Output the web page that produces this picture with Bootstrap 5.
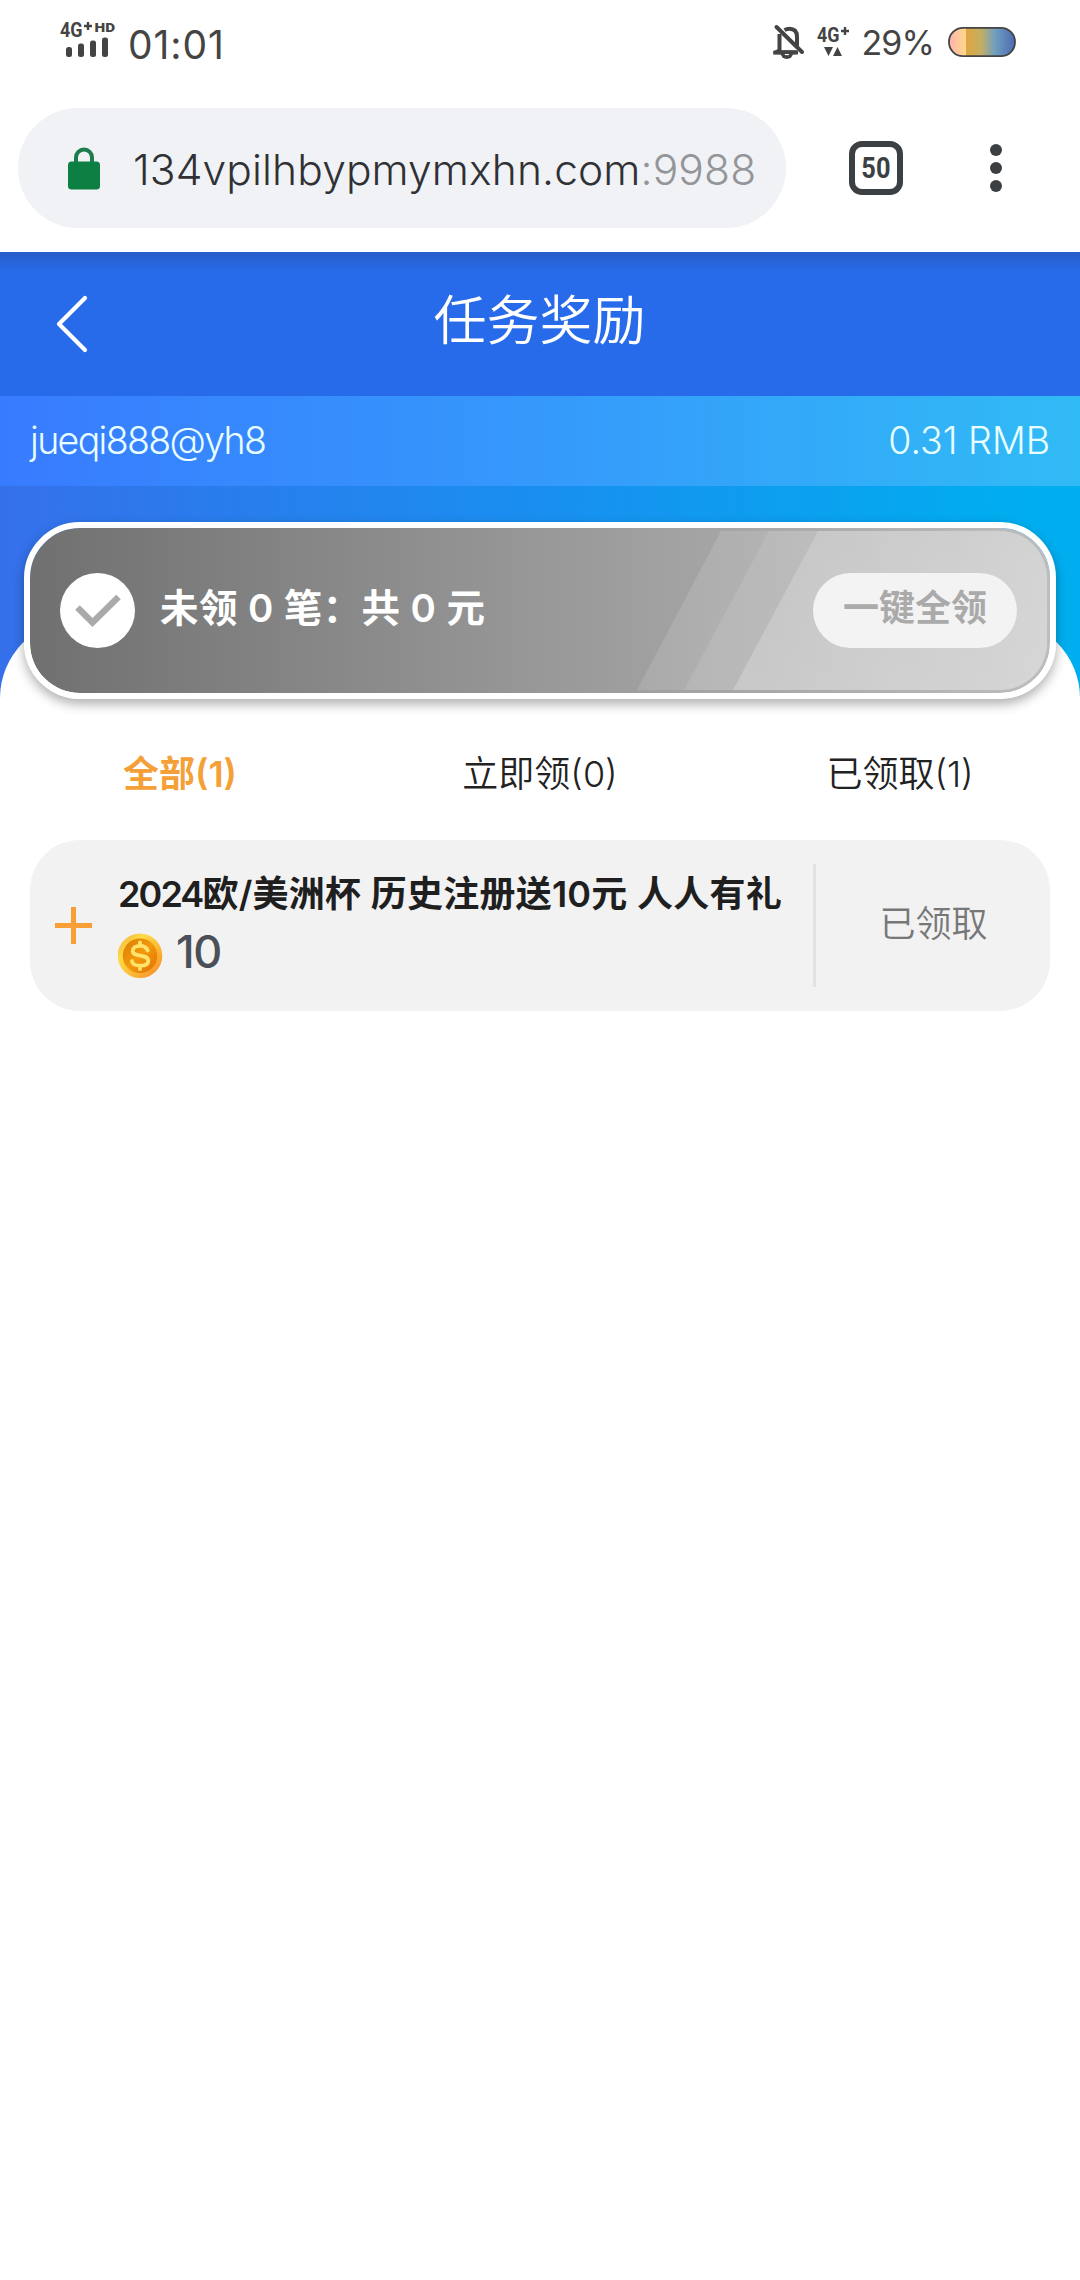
<!DOCTYPE html>
<html lang="zh-CN">
<head>
<meta charset="utf-8">
<meta name="viewport" content="width=device-width, initial-scale=1">
<title>任务奖励</title>
<link href="https://cdn.jsdelivr.net/npm/bootstrap@5.3.0/dist/css/bootstrap.min.css" rel="stylesheet">
<style>
body{background:#fff;font-family:Inter,"Noto Sans CJK SC",sans-serif;font-weight:300;line-height:1;color:#222;overflow-x:hidden}
body *{white-space:nowrap}
svg{display:block;flex:none}
.statusbar{height:108px;padding:0 63px 0 58px;color:#444}
.icons-l{margin-top:19px}
.clock{font-size:39px;font-weight:400;margin:25px 0 0 11px;letter-spacing:.9px}
.percent{width:74px;font-size:34px;font-weight:400;margin:26px 13px 0 10px;letter-spacing:-.9px;text-align:right}
.browserbar{height:144px;padding-left:18px}
.omnibox{width:768px;height:120px;border-radius:60px;background:#f0f2f5;padding-left:50px}
.url{font-size:42.5px;margin-left:33px;padding-top:5px;color:#303134;letter-spacing:.12px}
.url .port{color:#939598}
.tools{height:120px}
.tabcount{width:54px;height:54px;border:6px solid #3c4043;border-radius:13px;margin-left:63px;font:700 29.5px Roboto,sans-serif;color:#3c4043}
.tabcount span{transform:scaleX(.86)}
.kebab{gap:6px;margin-left:87px}
.kebab i{width:12px;height:12px;border-radius:50%;background:#3c4043}
.titlebar{height:144px;background:linear-gradient(#285cc9 0,#286bea 20px);color:#fff}
.titlebar .back{width:120px;padding-left:54px}
.titlebar h1{font-size:53px;font-weight:350;margin:0;padding:0 1px 4px 0}
.titlebar .spacer{width:120px}
.account{height:90px;padding:0 30px;background:linear-gradient(90deg,#387bff,#3599fb 50%,#31bbf6);color:#e9ffff;font-size:37.5px}
.account .user{letter-spacing:-1.65px}
.backdrop{height:212px;background:linear-gradient(90deg,#3570ea,#198ff0 50%,#00aeef 95%)}
.sheet{margin-top:-78px;border-radius:78px 78px 0 0;background:#fff;padding-top:1px}
.claim{position:relative;margin:-99px 24px 0;height:177px;border:6px solid #fff;border-radius:56px;background:linear-gradient(90deg,#707070,#989898 50%,#bdbdbd) padding-box;padding:0 33px 0 30px;box-shadow:0 5px 12px rgba(0,0,0,.32)}
.claim>*{position:relative}
.claim .shine{position:absolute;left:0;top:0}
.checkdot{width:75px;height:75px;border-radius:50%;background:#fff}
.claimtext{font-size:38.5px;font-weight:600;color:#fff;margin-left:25px;padding-bottom:5px;letter-spacing:.4px}
.claimbtn{width:204px;height:75px;border-radius:38px;background:#f3f3f3!important;border:0;color:#aaa!important;font-size:36px;font-weight:600;opacity:1!important;padding:0 0 5px}
.tabs{height:141px;font-size:36px;font-weight:350}
.tabs .nav-link{flex:1;color:#222;text-align:center;padding:57px 0 0}
.tabs .nav-link.active{color:#f4a037;font-weight:600}
.reward{height:171px;margin:0 30px;border-radius:50px;background:#f2f2f2;border:0}
.reward .plus{margin:0 25px}
.rbody{width:695px}
.rname{font-size:36px;font-weight:600;color:#1f1f1f;margin-top:36px;letter-spacing:.25px}
.rname .year{letter-spacing:-1.9px}
.rrow{margin-top:17px}
.ramount{font-size:45px;font-weight:500;color:#4b4f57;margin-left:12px;padding-bottom:9px;letter-spacing:-1.5px}
.rline{width:3px;height:123px;background:#e2e2e2}
.rstate{font-size:36px;font-weight:350;color:#777;padding:0 0 3px 1px}
</style>
<script src="https://cdn.jsdelivr.net/npm/bootstrap@5.3.0/dist/js/bootstrap.bundle.min.js"></script>
</head>
<body>
<div class="statusbar d-flex align-items-start">
  <svg class="icons-l" width="59" height="42" viewBox="58 19 59 42" fill="#444">
    <text x="60" y="36.5" font-family="Roboto" font-weight="700" font-size="20" textLength="22.5" lengthAdjust="spacingAndGlyphs">4G</text>
    <path d="M84 26h8M88 22v8" stroke="#444" stroke-width="2.4"/>
    <text x="94.5" y="32" font-family="Roboto" font-weight="900" font-size="13.5" textLength="20.5" lengthAdjust="spacingAndGlyphs">HD</text>
    <rect x="66" y="47" width="6" height="10" rx="2.5"/><rect x="78" y="43.5" width="6" height="13.5" rx="2.5"/><rect x="90" y="40.5" width="6" height="16.5" rx="2.5"/><rect x="102" y="37.5" width="6" height="19.5" rx="2.5"/>
  </svg>
  <div class="clock">01:01</div>
  <div class="d-flex ms-auto">
    <svg width="82" height="64" viewBox="768 0 82 64" fill="#444">
      <path d="M779.500 34v15.500l-2.500 3h21M784.500 30q2.500-1.300 5-1.300 7.500 0 7.500 8.300v11" fill="none" stroke="#444" stroke-width="4"/>
      <path d="M775 52.200h20.500M776.500 27l25.500 25" stroke="#444" stroke-width="4" stroke-linecap="round"/>
      <path d="M780.500 53a6.300 6 0 0 0 12.600 0z"/><path d="M784.500 54a2.400 1.300 0 0 0 4.800 0z" fill="#fff"/>
      <text x="817" y="41.5" font-family="Roboto" font-weight="700" font-size="20" textLength="22.5" lengthAdjust="spacingAndGlyphs">4G</text>
      <path d="M841 31h8M845 27v8" stroke="#444" stroke-width="2.4"/>
      <path d="M824 47h9l-4.500 9zM833 56h9l-4.500-9z"/>
    </svg>
    <div class="percent">29%</div>
    <svg width="70" height="64" viewBox="947 0 70 64">
      <defs>
        <linearGradient id="batA"><stop offset="0" stop-color="#ffb0b0"/><stop offset="1" stop-color="#ffd88a"/></linearGradient>
        <linearGradient id="batB"><stop offset="0" stop-color="#dfa63f"/><stop offset=".3" stop-color="#c4ae62"/><stop offset=".58" stop-color="#6f9fc0"/><stop offset="1" stop-color="#4c66b0"/></linearGradient>
        <clipPath id="batC"><rect x="949" y="28" width="66" height="28" rx="14"/></clipPath>
      </defs>
      <g clip-path="url(#batC)"><rect x="948" y="27" width="18" height="30" fill="url(#batA)"/><rect x="966" y="27" width="50" height="30" fill="url(#batB)"/></g>
      <rect x="949" y="27.800" width="66" height="28.400" rx="14" fill="none" stroke="#444" stroke-width="1.8"/>
    </svg>
  </div>
</div>
<div class="browserbar d-flex align-items-start">
  <div class="omnibox d-flex align-items-center">
    <svg width="32" height="43" viewBox="0 0 32 43"><path d="M8 18v-7.500a8 8 0 0 1 16 0v7.500" fill="none" stroke="#1c7c4b" stroke-width="4"/><rect y="14.5" width="32" height="28" rx="3.5" fill="#0c8043"/></svg>
    <div class="url"><span>134vpilhbypmymxhn.com</span><span class="port">:9988</span></div>
  </div>
  <div class="tools d-flex align-items-center">
    <div class="tabcount d-flex align-items-center justify-content-center"><span>50</span></div>
    <div class="kebab d-flex flex-column"><i></i><i></i><i></i></div>
  </div>
</div>
<header class="titlebar d-flex align-items-center justify-content-between">
  <a class="back"><svg width="34" height="58" viewBox="54 297 34 58"><path d="M85 300L59 326L85 352" fill="none" stroke="#fff" stroke-width="4.2" stroke-linecap="round" stroke-linejoin="round"/></svg></a>
  <h1>任务奖励</h1>
  <div class="spacer"></div>
</header>
<div class="account d-flex align-items-center justify-content-between"><span class="user">jueqi888@yh8</span><span>0.31 RMB</span></div>
<div class="backdrop"></div>
<main class="sheet">
  <section class="claim d-flex align-items-center">
    <svg class="shine" width="1020" height="165" viewBox="30 528 1020 165">
      <defs><clipPath id="in"><rect x="33" y="531" width="1014" height="159" rx="47"/></clipPath>
      <linearGradient id="sh" x1="0" y1="0" x2="0" y2="1"><stop offset="0" stop-color="#fff" stop-opacity=".17"/><stop offset="1" stop-color="#fff" stop-opacity=".23"/></linearGradient></defs>
      <g clip-path="url(#in)" fill="#fff">
        <path d="M721 531L637 690H1050V531z" fill-opacity=".12"/><path d="M769 531L684 690H1050V531z" fill-opacity=".1"/><path d="M818 531L733 690H1050V531z" fill="url(#sh)"/>
      </g>
    </svg>
    <div class="checkdot d-flex align-items-center justify-content-center"><svg width="75" height="75" viewBox="60 573 75 75"><path d="M77.500 607.500L92.500 622.500L118.500 597" fill="none" stroke="#aaa" stroke-width="6.5"/></svg></div>
    <div class="claimtext">未领 0 笔：共 0 元</div>
    <button class="claimbtn btn ms-auto" disabled>一键全领</button>
  </section>
  <nav class="tabs nav flex-nowrap">
    <a class="nav-link active">全部(1)</a><a class="nav-link">立即领(0)</a><a class="nav-link">已领取(1)</a>
  </nav>
  <article class="reward card flex-row align-items-center">
    <svg class="plus" width="38" height="38" viewBox="0 0 38 38"><path d="M0 18.500h37M18.500 0v37" stroke="#f8a037" stroke-width="5"/></svg>
    <div class="rbody d-flex flex-column align-self-start">
      <div class="rname"><span class="year">2024</span>欧/美洲杯 历史注册送10元 人人有礼</div>
      <div class="d-flex align-items-center rrow">
        <svg width="46" height="46" viewBox="0 0 46 46">
          <defs><linearGradient id="c1" x1="0" y1="0" x2="1" y2="1"><stop offset="0" stop-color="#f0a63c"/><stop offset=".3" stop-color="#ffdb45"/><stop offset=".6" stop-color="#fdbb35"/><stop offset="1" stop-color="#f5862a"/></linearGradient>
          <linearGradient id="c2" x1="0" y1="0" x2="1" y2="1"><stop offset="0" stop-color="#d97c05"/><stop offset=".5" stop-color="#f39a0c"/><stop offset="1" stop-color="#e06e06"/></linearGradient></defs>
          <circle cx="22" cy="22.8" r="22.3" fill="url(#c1)"/><circle cx="22" cy="22.8" r="17.3" fill="url(#c2)"/>
          <path d="M29.700 17.500C28.500 14.200 25.500 12.900 22 12.900 17.500 12.900 14.700 14.900 14.700 17.900 14.700 24.600 30.300 20.500 30.300 27.700 30.300 31 27 32.700 22 32.700 17.500 32.700 14.500 31 13.900 28M22 9.500v3M22 33v3" fill="none" stroke="#ffe36b" stroke-width="3.8" stroke-linecap="round"/>
        </svg>
        <div class="ramount">10</div>
      </div>
    </div>
    <div class="rline"></div>
    <div class="rstate flex-fill text-center">已领取</div>
  </article>
</main>
</body>
</html>
